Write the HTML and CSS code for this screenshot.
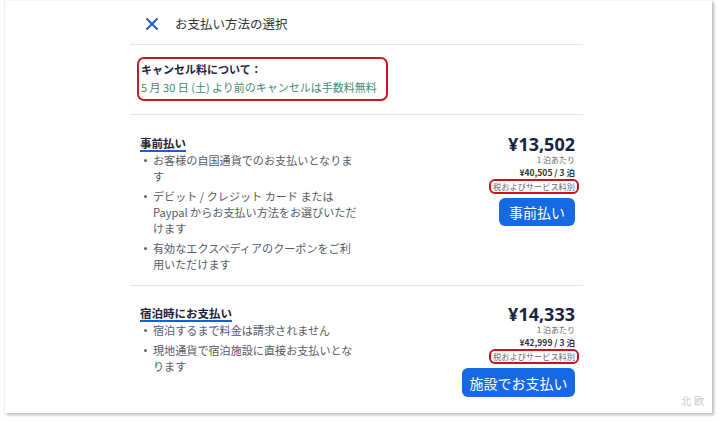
FILE: index.html
```html
<!DOCTYPE html>
<html lang="ja">
<head>
<meta charset="utf-8">
<link rel="stylesheet" href="styles.css">
</head>
<body>
<div class="frame">
  <div class="content">
    <div class="header">
      <svg class="close" width="12" height="12" viewBox="0 0 12 12"><path d="M1 1L11 11M11 1L1 11" stroke="#1f55b8" stroke-width="1.8" stroke-linecap="round"/></svg>
      <span class="title">お支払い方法の選択</span>
    </div>
    <div class="notice-wrap">
      <div class="notice">
        <div class="notice-head">キャンセル料について：</div>
        <div class="notice-body">5 月 30 日 (土) より前のキャンセルは手数料無料</div>
      </div>
    </div>
    <div class="option first">
      <div class="info">
        <div class="opt-title"><span>事前払い</span></div>
        <ul class="bullets">
          <li>お客様の自国通貨でのお支払いとなりま<br>す</li>
          <li>デビット / クレジット カード または<br>Paypal からお支払い方法をお選びいただ<br>けます</li>
          <li>有効なエクスペディアのクーポンをご利<br>用いただけます</li>
        </ul>
      </div>
      <div class="price">
        <div class="amount">¥13,502</div>
        <div class="per">1 泊あたり</div>
        <div class="total">¥40,505 / 3 泊</div>
        <div class="tax">税およびサービス料別</div>
        <button class="btn btn-a">事前払い</button>
      </div>
    </div>
    <div class="option second">
      <div class="info">
        <div class="opt-title"><span>宿泊時にお支払い</span></div>
        <ul class="bullets">
          <li>宿泊するまで料金は請求されません</li>
          <li>現地通貨で宿泊施設に直接お支払いとな<br>ります</li>
        </ul>
      </div>
      <div class="price">
        <div class="amount">¥14,333</div>
        <div class="per">1 泊あたり</div>
        <div class="total">¥42,999 / 3 泊</div>
        <div class="tax">税およびサービス料別</div>
        <button class="btn btn-b">施設でお支払い</button>
      </div>
    </div>
  </div>
  <div class="watermark">北欧</div>
</div>
</body>
</html>
```

FILE: styles.css
```css
* { box-sizing: border-box; }
html, body { margin: 0; padding: 0; background: #fff; }
body {
  font-family: "Noto Sans CJK JP", "Noto Sans", sans-serif;
  width: 720px; height: 421px; overflow: hidden;
}
.frame {
  position: relative;
  margin-left: 4px;
  width: 708px;
  height: 413px;
  background: #fff;
  border-left: 1px solid #f0f0f0;
  border-top: 1px solid #f6f6f6;
  box-shadow: 2px 2px 3px rgba(0,0,0,0.28);
}
.content {
  margin-left: 125px;
  width: 453px;
}
.header {
  height: 44px;
  display: flex;
  align-items: center;
  border-bottom: 1px solid #e4e4e4;
  padding-left: 16px;
  padding-top: 2px;
}
.close { display: block; }
.title {
  margin-left: 17px;
  font-size: 12.5px;
  color: #333;
}
.notice-wrap {
  padding: 12px 0 13px 7px;
  border-bottom: 1px solid #e4e4e4;
}
.notice {
  width: 251px;
  height: 44px;
  border: 2px solid #d01626;
  border-radius: 7px;
  padding: 2px 0 0 2px;
}
.notice-head {
  font-size: 11px;
  font-weight: 700;
  color: #1b2340;
  line-height: 17px;
}
.notice-body {
  font-size: 11px;
  color: #3f8c72;
  line-height: 18px;
}
.option {
  display: flex;
  justify-content: space-between;
  padding: 19px 8px 0 10px;
}
.option.first {
  height: 171px;
  border-bottom: 1px solid #e4e4e4;
}
.option.second { padding-top: 18px; }
.info { width: 240px; }
.opt-title { line-height: 14px; }
.opt-title span {
  display: inline-block;
  font-size: 11.5px;
  font-weight: 700;
  color: #1b2340;
  border-bottom: 2px solid #1a5fd0;
  line-height: 14px;
}
.bullets {
  list-style: none;
  margin: 0;
  padding: 0;
}
.bullets li {
  position: relative;
  padding-left: 13px;
  font-size: 11.1px;
  line-height: 16px;
  color: #555a66;
  margin-bottom: 4px;
  white-space: nowrap;
}
.bullets li::before {
  content: "";
  position: absolute;
  left: 4px;
  top: 7px;
  width: 3px;
  height: 3px;
  border-radius: 50%;
  background: #666;
}
.price {
  display: flex;
  flex-direction: column;
  align-items: flex-end;
}
.amount {
  font-family: "Noto Sans", "Noto Sans CJK JP", sans-serif;
  font-size: 18px;
  font-weight: 700;
  color: #1b2340;
  line-height: 18px;
  margin-top: 1px;
}
.per {
  font-size: 8px;
  color: #666;
  line-height: 11px;
  margin-top: 1px;
}
.total {
  font-size: 8.5px;
  font-weight: 700;
  color: #333;
  line-height: 12px;
  margin-top: 1px;
}
.tax {
  margin-top: 1px;
  margin-right: -4px;
  font-size: 8.2px;
  color: #666;
  line-height: 11px;
  border: 2px solid #c8141f;
  border-radius: 6px;
  padding: 0 2px;
}
.btn {
  margin-top: 4px;
  height: 28px;
  border: none;
  border-radius: 6px;
  background: #1668e3;
  color: #fff;
  font-family: "Noto Sans CJK JP", sans-serif;
  font-size: 14px;
  padding: 0;
}
.btn-a { width: 76px; }
.btn-b { width: 113px; height: 29px; }
.watermark {
  position: absolute;
  right: 5px;
  bottom: 5px;
  font-size: 10px;
  color: #c8c8c8;
  letter-spacing: 3px;
}
```
